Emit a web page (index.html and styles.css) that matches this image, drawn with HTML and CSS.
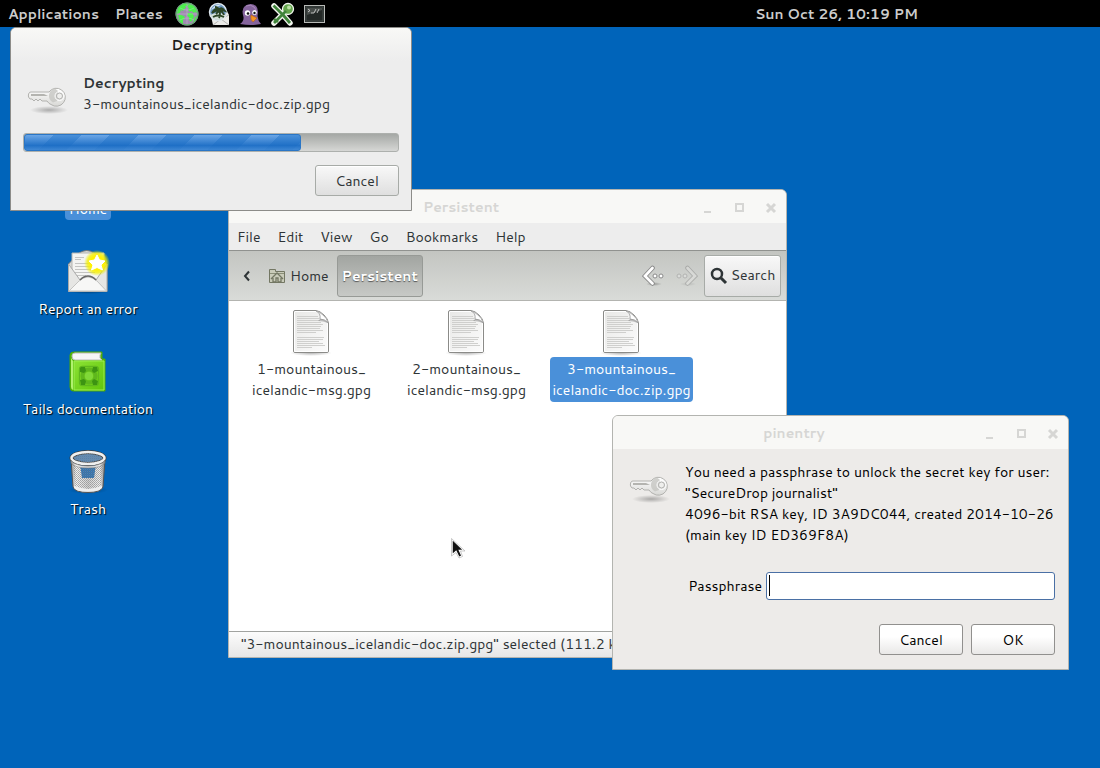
FILE: index.html
```html
<!DOCTYPE html>
<html lang="en">
<head>
<meta charset="utf-8">
<meta name="viewport" content="width=device-width, initial-scale=1">
<title>Desktop</title>
<link rel="stylesheet" href="styles.css">
</head>
<body>
<svg class="defs" aria-hidden="true">
  <defs>
    <linearGradient id="keyG" x1="0" y1="0" x2="0" y2="1"><stop offset="0" stop-color="#fff"/><stop offset="1" stop-color="#d8d8d5"/></linearGradient>
    <linearGradient id="metal" x1="0" y1="0" x2="1" y2="0"><stop offset="0" stop-color="#888"/><stop offset=".15" stop-color="#f4f4f4"/><stop offset=".5" stop-color="#d0d0d0"/><stop offset=".85" stop-color="#eee"/><stop offset="1" stop-color="#777"/></linearGradient>
    <linearGradient id="paper" x1="0" y1="0" x2="1" y2="1"><stop offset="0" stop-color="#e8e8e6"/><stop offset="1" stop-color="#fcfcfc"/></linearGradient>
    <linearGradient id="book" x1="0" y1="0" x2="1" y2="1"><stop offset="0" stop-color="#8be234"/><stop offset="1" stop-color="#62c60c"/></linearGradient>
    <radialGradient id="glow"><stop offset=".5" stop-color="#fff200"/><stop offset=".75" stop-color="#f4ee00" stop-opacity=".75"/><stop offset="1" stop-color="#e8f000" stop-opacity="0"/></radialGradient>
    <radialGradient id="shade"><stop offset="0" stop-color="#000" stop-opacity=".28"/><stop offset="1" stop-color="#000" stop-opacity="0"/></radialGradient>
    <pattern id="mesh" width="2" height="2" patternUnits="userSpaceOnUse"><rect width="1" height="1" fill="#777"/><rect x="1" y="1" width="1" height="1" fill="#888"/></pattern>
    <symbol id="key" viewBox="0 0 48 48">
      <ellipse cx="25" cy="33" rx="19" ry="4" fill="url(#shade)"/>
      <path d="M5 16Q4 18 4.500 20L6 22H8L10 24L12 22L14 24L16 22L18 24H23Q25 27 27 27.500A9 9 0 1 0 25 15H7Q5.500 15 5 16Z" fill="url(#keyG)" stroke="#b2b2af"/>
      <path d="M7 17H20L24 19H7Z" fill="#b4b4b0"/>
      <path d="M31 11.500A7.500 7.500 0 0 0 29 25.500L33 24L34 14Z" fill="#c6c6c2" opacity=".8"/>
      <circle cx="35.500" cy="19" r="3" fill="#efefed" stroke="#b0b0ae"/>
      <circle cx="35.500" cy="19" r="4.500" fill="none" stroke="#fff"/>
    </symbol>
    <symbol id="doc" viewBox="0 0 48 48">
      <ellipse cx="23" cy="45" rx="21" ry="3" fill="url(#shade)"/>
      <path d="M7 2.500H28Q32 3 36 7Q40 11 40.500 15V43Q40.500 44.500 39 44.500H7Q5.500 44.500 5.500 43V4Q5.500 2.500 7 2.500Z" fill="url(#paper)" stroke="#8b8b88"/>
      <path d="M7 3.500H28Q31 4 35 8Q39 12 39.500 15V43.500H6.500V4Z" fill="none" stroke="#fff"/>
      <path d="M9 8.500H30M9 10.500H31M9 12.500H32M9 14.500H33M9 16.500H35M9 18.500H33M9 20.500H32M9 22.500H35M9 24.500H28M9 29.500H36M9 31.500H35M9 33.500H31M9 35.500H35M9 37.500H37M9 39.500H24" stroke="#cfcfcd"/>
      <path d="M28 3Q33 5 32 11Q37 11 40 15Q39 10 35 7Q32 4 28 3Z" fill="#fff" stroke="#aaa"/>
      <path d="M32 11Q37 11 40 15Q35 13 30 13Z" fill="#888" opacity=".5"/>
    </symbol>
    <symbol id="minimize" viewBox="0 0 12 12"><path d="M1 10H8" stroke="currentColor" stroke-width="2"/></symbol>
    <symbol id="maximize" viewBox="0 0 12 12"><rect x="2" y="2" width="7" height="7" fill="none" stroke="currentColor" stroke-width="2"/></symbol>
    <symbol id="close" viewBox="0 0 12 12"><path d="M2 2L10 10M10 2L2 10" stroke="currentColor" stroke-width="3"/></symbol>
  </defs>
</svg>

<header class="panel">
  <nav class="panel-menu">
    <button class="panel-item">Applications</button>
    <button class="panel-item">Places</button>
    <button class="launcher" aria-label="Web browser"><svg viewBox="0 0 24 24">
      <circle cx="12" cy="12" r="11.500" fill="#a08bb0"/>
      <path d="M3 6Q7 1 13 2L12 4L10 4L11 6L9 7L8 9L6 8L5 11L2 12ZM14 2Q19 3 21 7L22 11L20 10L18 11L17 9L15 10L13 8L14 6L12 5ZM3 13L6 13L9 14L10 16L8 18L8 22L5 20L4 17ZM13 11L17 11L19 14L18 17L16 20L14 18L14 15L12 14ZM20 15L22 14L20 19L18 20Z" fill="#4df04d"/>
      <circle cx="12" cy="12" r="11" fill="none" stroke="#56b961"/><path d="M2 12H22M12 2V22M5 6Q12 10 19 6M5 18Q12 14 19 18" fill="none" stroke="#d6cbdc" stroke-width=".6" opacity=".6"/>
    </svg></button>
    <button class="launcher" aria-label="Mail"><svg viewBox="0 0 24 24">
      <path d="M4 14L20 9L22 13V23H6Z" fill="#ecece9"/><path d="M6 23L14 17L22 23M14 17L22 13" fill="none" stroke="#a4a4a2" stroke-width=".8"/>
      <circle cx="11" cy="10" r="8.500" fill="#6b96bf" stroke="#dfe8ef" stroke-width="1.500"/>
      <path d="M4 8Q8 2 14 3Q9 5 4 8Z" fill="#d5e5f3"/>
      <path d="M3 13Q11 9 19 13Q16 18 11 18Q6 18 3 13Z" fill="#d5e0d9"/>
      <path d="M12 16Q14 12 12 8M12 8Q8 5 5 11Q9 8 12 8Q11 10 9 12M12 8Q14 4 18 9Q15 8 12 8Q16 10 17 13M12 8Q11 5 8 5M6 15Q11 12 17 15" fill="none" stroke="#2b4425" stroke-width="1.800"/>
    </svg></button>
    <button class="launcher" aria-label="Messenger"><svg viewBox="0 0 24 24">
      <path d="M1 22Q5 19 4.500 15Q2 7 6 4Q12 0 17 4Q20 7 18.500 14Q19 19 22 22Q12 24 1 22Z" fill="#85649c"/>
      <path d="M7 4Q12 2 15 5Q17 7 17 10" fill="none" stroke="#aa8abb"/>
      <ellipse cx="8.500" cy="11" rx="2.700" ry="2.700" fill="#fff"/><ellipse cx="15.500" cy="10.500" rx="2.300" ry="2.500" fill="#fff"/>
      <circle cx="9" cy="11.500" r="1.300" fill="#111"/><circle cx="15.500" cy="11" r="1.200" fill="#111"/>
      <path d="M12 13L18 16L14 20Q11 18 12 13Z" fill="#f59422" stroke="#b75a0a" stroke-width=".5"/>
    </svg></button>
    <button class="launcher" aria-label="Passwords"><svg viewBox="0 0 24 24">
      <path d="M3 4L13 14L19 21M3 21L15 9" fill="none" stroke="#f3f6ef" stroke-width="5.500" stroke-linecap="round"/>
      <circle cx="17" cy="7" r="5.500" fill="#64a64d" stroke="#f3f6ef" stroke-width="1.300"/>
      <path d="M2.500 3.500L13 14L19 21M3 21L15 9M3 17L7 20" fill="none" stroke="#40843b" stroke-width="2.800"/>
      <circle cx="18" cy="5.500" r="2" fill="#b9dfa4"/>
    </svg></button>
    <button class="launcher" aria-label="Terminal"><svg viewBox="0 0 24 24">
      <rect x="1.500" y="3.500" width="20" height="17" fill="#232826" stroke="#b8bab7"/><rect x="3" y="5" width="17" height="14" fill="none" stroke="#454a48"/>
      <path d="M4 13L19 8V6H4Z" fill="#606663" opacity=".6"/><path d="M5 7L7 8.500L5 10M8 11H11M13 7L11 11M16 7L14 11" fill="none" stroke="#ddd" stroke-width=".8"/>
    </svg></button>
  </nav>
  <button class="panel-item clock">Sun Oct 26, 10:19 PM</button>
</header>

<main class="desktop">
  <section class="shortcuts" aria-label="Desktop icons">
    <a class="shortcut" href="#home"><svg viewBox="0 0 48 48"><path d="M5 12H18L21 16H43V43H5Z" fill="#aaa78f"/></svg><span class="shortcut-label selected">Home</span></a>
    <a class="shortcut" href="#report"><svg viewBox="0 0 48 48">
      <ellipse cx="24" cy="46" rx="21" ry="2" fill="url(#shade)"/>
      <path d="M4.500 18L15 7Q23 2 30 7L43 18V45.500H4.500Z" fill="#d8d8d5" stroke="#777"/>
      <path d="M8 7H40V36H8Z" fill="#f4f4f2" stroke="#b5b5b2"/>
      <path d="M11 11.500H20M11 13.500H17M11 17.500H26M11 20.500H27M11 23.500H30M11 26.500H31M11 29.500H22" stroke="#c4c4c2"/>
      <path d="M4.500 18L16 34Q23 28 32 34L43 18V45.500H4.500Z" fill="#e6e6e4" stroke="#aaa"/>
      <path d="M5 45L15 35Q24 27 33 35L42.500 45Z" fill="#f7f7f6" stroke="#c4c4c2"/>
      <path d="M16 34Q20 30 24 30Q28 30 32 34" fill="none" stroke="#666" stroke-width="1.500"/>
      <circle cx="33" cy="17" r="13" fill="url(#glow)"/>
      <path d="M33 9L35.500 14L41 15L37 19L38.500 24L33 21.500L27.500 24L29 19L25 15L30.500 14Z" fill="#fff" stroke="#fff" stroke-linejoin="round"/>
    </svg><span class="shortcut-label">Report an error</span></a>
    <a class="shortcut" href="#documentation"><svg viewBox="0 0 48 48">
      <path d="M6 9Q6 6 10 6H38V13H41V45H9Q6 45 6 41Z" fill="#56b90b" stroke="#4aa808"/>
      <path d="M8 10Q8 7 11 7H37L36 9V12L38 14H11Q8 14 8 10Z" fill="#f6f6f6" stroke="#bbb"/>
      <path d="M10 15H40V44H10Z" fill="url(#book)" stroke="#9def50"/>
      <path d="M7 12V41Q7 43 9 44V15Z" fill="#b2f16f"/>
      <g fill="none" stroke="#5fb71d"><circle cx="25" cy="30" r="6.500" stroke-width="4"/><rect x="15.500" y="20.500" width="19" height="19" rx="3" stroke-width="1.300"/></g>
      <path d="M17 21H21L22 25L20 27L16 26V22ZM29 21H33L34 25L30 27L28 25ZM16 34L20 33L22 35L21 39H17ZM30 33L34 35L33 39H29L28 35Z" fill="#3d9412"/>
      <circle cx="25" cy="30" r="4" fill="#80d838"/>
    </svg><span class="shortcut-label">Tails documentation</span></a>
    <a class="shortcut" href="#trash"><svg viewBox="0 0 48 48">
      <ellipse cx="24" cy="44" rx="20" ry="4" fill="url(#shade)"/>
      <path d="M7 14L9 41Q11 46.500 24 46.500Q37 46.500 39 41L41 14Z" fill="url(#metal)" stroke="#555"/>
      <path d="M16 18H32L30 32H18Z" fill="#2874bc"/>
      <path d="M9 18L11 40Q24 46 37 40L39 18Z" fill="url(#mesh)" opacity=".6"/>
      <path d="M10 40Q24 46 38 40V42Q33 45.500 24 45.500Q13 45.500 10 42Z" fill="#eee"/>
      <ellipse cx="24" cy="12" rx="16.500" ry="6" fill="#5a8cbd" stroke="#3c3c3c" stroke-width="4"/>
      <ellipse cx="24" cy="12" rx="16.500" ry="6" fill="url(#mesh)" fill-opacity=".5" stroke="#f0f0f0" stroke-width="2.500"/>
      <path d="M7 14Q10 20 24 20Q38 20 41 14V17Q37 22 24 22Q11 22 7 17Z" fill="url(#metal)" stroke="#777" stroke-width=".5"/>
    </svg><span class="shortcut-label">Trash</span></a>
  </section>

  <section class="window files" aria-label="Persistent">
    <div class="titlebar"><h2 class="title">Persistent</h2>
      <div class="controls"><button aria-label="Minimize"><svg><use href="#minimize"/></svg></button><button aria-label="Maximize"><svg><use href="#maximize"/></svg></button><button aria-label="Close"><svg><use href="#close"/></svg></button></div>
    </div>
    <nav class="menubar"><button>File</button><button>Edit</button><button>View</button><button>Go</button><button>Bookmarks</button><button>Help</button></nav>
    <div class="toolbar">
      <button class="tool back" aria-label="Scroll path left"><svg viewBox="0 0 10 12"><path d="M7 1.500L3 6L7 10.500" fill="none" stroke="#2e3436" stroke-width="2"/></svg></button>
      <button class="tool crumb"><svg viewBox="0 0 18 18"><path d="M1.500 15.500V2.500H7.500V4.500H16.500V15.500Z" fill="#c9cbb9" stroke="#737763"/><path d="M2 6.500H16" stroke="#8b8f79"/><path d="M3 12L9 6L15 12M5 11V15H8V11H10V15H13V11" fill="none" stroke="#737763" stroke-width="1.300"/></svg>Home</button>
      <button class="tool crumb current">Persistent</button>
      <div class="history">
        <button class="tool" aria-label="Back"><svg viewBox="0 0 22 22"><ellipse cx="12" cy="19" rx="8" ry="2" fill="url(#shade)"/><path d="M10.500 3L3 11L10.500 18.500" fill="none" stroke="#888" stroke-width="4.500" stroke-linecap="round"/><path d="M10.500 3L3 11L10.500 18.500" fill="none" stroke="#fff" stroke-width="2.700" stroke-linecap="round"/><circle cx="13" cy="11" r="2" fill="#fff" stroke="#888"/><circle cx="19" cy="11" r="2" fill="#fff" stroke="#888"/></svg></button>
        <button class="tool faded" aria-label="Forward" disabled><svg viewBox="0 0 22 22"><ellipse cx="12" cy="19" rx="8" ry="2" fill="url(#shade)"/><path d="M11.500 3L19 11L11.500 18.500" fill="none" stroke="#777" stroke-width="4.500" stroke-linecap="round"/><path d="M11.500 3L19 11L11.500 18.500" fill="none" stroke="#e8e8e6" stroke-width="2.700" stroke-linecap="round"/><circle cx="9" cy="11" r="2" fill="#eee" stroke="#888"/><circle cx="3" cy="11" r="2" fill="#eee" stroke="#888"/></svg></button>
      </div>
      <button class="button search"><svg viewBox="0 0 18 18"><circle cx="7" cy="7" r="5" fill="none" stroke="#2e3436" stroke-width="2.500"/><path d="M11 11L16 16" stroke="#2e3436" stroke-width="3"/></svg>Search</button>
    </div>
    <div class="file-list">
      <div class="file"><svg><use href="#doc"/></svg><span class="file-name">1-mountainous_<br>icelandic-msg.gpg</span></div>
      <div class="file"><svg><use href="#doc"/></svg><span class="file-name">2-mountainous_<br>icelandic-msg.gpg</span></div>
      <div class="file"><svg><use href="#doc"/></svg><span class="file-name selected">3-mountainous_<br>icelandic-doc.zip.gpg</span></div>
    </div>
    <footer class="statusbar">"3-mountainous_icelandic-doc.zip.gpg" selected (111.2 kB)</footer>
  </section>

  <section class="window decrypting" role="dialog" aria-label="Decrypting">
    <div class="titlebar active"><h2 class="title">Decrypting</h2></div>
    <div class="dialog-body">
      <div class="message"><svg class="key"><use href="#key"/></svg><div><label class="heading" for="decrypt-progress">Decrypting</label><p class="filename">3-mountainous_icelandic-doc.zip.gpg</p></div></div>
      <progress id="decrypt-progress" value="74" max="100"></progress>
      <div class="actions"><button class="button">Cancel</button></div>
    </div>
  </section>

  <section class="window pinentry" role="dialog" aria-label="pinentry">
    <div class="titlebar"><h2 class="title">pinentry</h2>
      <div class="controls"><button aria-label="Minimize"><svg><use href="#minimize"/></svg></button><button aria-label="Maximize"><svg><use href="#maximize"/></svg></button><button aria-label="Close"><svg><use href="#close"/></svg></button></div>
    </div>
    <form class="dialog-body">
      <div class="message"><svg class="key"><use href="#key"/></svg><p>You need a passphrase to unlock the secret key for user:<br>"SecureDrop journalist"<br>4096-bit RSA key, ID 3A9DC044, created 2014-10-26<br>(main key ID ED369F8A)</p></div>
      <div class="field"><label for="passphrase">Passphrase</label><div class="entry"><input id="passphrase" type="password"><i class="caret"></i></div></div>
      <div class="actions"><button class="button" type="button">Cancel</button><button class="button" type="button">OK</button></div>
    </form>
  </section>

  <svg class="pointer" viewBox="0 0 14 21" aria-hidden="true"><path d="M1 1V17L5 13.500L8 19.500L11 18L8.500 12.500H13Z" fill="#111" stroke="#fff" stroke-width="1.500"/><path d="M.5 .5V18L5 14.500L8 20L11.500 18.500L9.500 13H14Z" fill="none" stroke="#999" stroke-width=".5"/></svg>
</main>
</body>
</html>
```
FILE: styles.css
```css
* { box-sizing: border-box; }
body {
  margin: 0;
  min-height: 100vh;
  display: flex;
  flex-direction: column;
  background: #0064ba;
  color: #2e3436;
  font: 14px/21px Cantarell, "Open Sans", "Noto Sans", sans-serif;
}
h2, p { margin: 0; }
button, input { font: inherit; color: inherit; }
button { border: 0; padding: 0; background: none; white-space: nowrap; }
svg { display: block; flex: none; }
.defs { position: absolute; width: 0; height: 0; }

.panel {
  height: 27px;
  padding: 0 182px 0 8px;
  display: flex;
  align-items: center;
  justify-content: space-between;
  background: #000;
  color: #ccc;
}
.panel-menu { display: flex; align-items: center; gap: 8px; }
.panel-item { padding-top: 2px; font-weight: 600; }
.panel-menu .panel-item { margin-right: 8px; }
.panel-menu .panel-item + .panel-item { margin-right: 4px; }
.launcher svg { width: 24px; height: 24px; }

.desktop { position: relative; flex: 1; }
.shortcuts {
  width: 176px;
  padding-top: 119px;
  display: flex;
  flex-direction: column;
  gap: 26px;
}
.shortcut {
  display: flex;
  flex-direction: column;
  align-items: center;
  gap: 5px;
  color: #fff;
  text-decoration: none;
  text-shadow: 1px 1px 1px #000;
}
.shortcut svg { width: 48px; height: 48px; }
.shortcut-label { padding: 0 4px; border-radius: 4px; white-space: nowrap; }
.selected { background: #4a90d9; color: #fff; text-shadow: none; }

.window {
  position: absolute;
  display: flex;
  flex-direction: column;
  border: 1px solid #b3b4b0;
  border-radius: 6px 6px 0 0;
  background: #ededed;
}
.files { left: 228px; top: 162px; width: 559px; }
.decrypting { left: 10px; top: 0; width: 402px; border-color: #8c8c89; }
.pinentry { left: 612px; top: 388px; width: 457px; background: #edebe9; color: #000; }

.titlebar {
  display: flex;
  align-items: center;
  height: 33px;
  padding-top: 2px;
  border-radius: 5px 5px 0 0;
  background: #f8f8f6;
  color: #d6d6d4;
}
.titlebar.active { padding-left: 2px; background: linear-gradient(#f8f8f6, #ededed); color: #1c1c1c; }
.title { flex: 1; text-align: center; font-size: 14px; }
.controls { display: flex; }
.controls button { width: 31px; height: 30px; display: grid; place-items: center; }
.controls svg { width: 12px; height: 12px; }

.menubar { display: flex; gap: 17px; height: 27px; padding: 2px 8px 0; }
.toolbar {
  display: flex;
  align-items: center;
  height: 51px;
  padding: 0 5px;
  border-top: 1px solid #90928f;
  border-bottom: 1px solid #b3b4b0;
  background: linear-gradient(#c3c5c1, #d9dbd8);
}
.tool { display: flex; align-items: center; justify-content: center; gap: 4px; height: 42px; padding: 0 5px; }
.back { width: 25px; }
.back svg { width: 10px; height: 12px; }
.crumb svg { width: 18px; height: 18px; }
.crumb { padding: 1px 5px 0; }
.crumb:not(.current) { margin: 0 4px; padding-right: 4px; }
.current {
  padding: 1px 4px 0;
  border: 1px solid #979a96;
  border-radius: 3px;
  background: linear-gradient(#a2a5a1, #c7c9c6);
  color: #fff;
  font-weight: 700;
  text-shadow: 0 1px 1px #555;
}
.history { display: flex; margin: 0 1px 0 auto; gap: 2px; }
.history svg { width: 22px; height: 22px; }
.faded { opacity: .4; }
.button {
  min-width: 84px;
  height: 31px;
  padding: 2px 4px 0;
  border: 1px solid #a7aba7;
  border-radius: 3px;
  background: linear-gradient(#f8f8f8, #dfdfdf);
  box-shadow: inset 0 1px #fff;
}
.search { display: flex; align-items: center; justify-content: center; gap: 3px; height: 42px; min-width: 77px; padding-top: 0; }
.search svg { width: 18px; height: 18px; }

.file-list {
  display: grid;
  grid-template-columns: repeat(3, 155px);
  align-items: start;
  min-height: 330px;
  padding: 7px 5px;
  background: #fff;
}
.file { display: flex; flex-direction: column; align-items: center; gap: 1px; text-align: center; }
.file svg { width: 48px; height: 48px; }
.file-name { padding: 2px 2px 1px; border-radius: 4px; white-space: nowrap; }
.statusbar {
  height: 26px;
  padding: 2px 12px;
  border-top: 1px solid #a1a3a0;
  background: linear-gradient(#fcfcfc, #e6e6e6);
  white-space: nowrap;
  overflow: hidden;
}

.dialog-body { padding: 12px; display: flex; flex-direction: column; }
.message { display: flex; gap: 11px; padding-left: 1px; white-space: nowrap; }
.key { width: 48px; height: 48px; margin-top: 4px; }
.heading { font-weight: 700; }
.decrypting .dialog-body { padding-bottom: 14px; }
progress {
  appearance: none;
  width: 100%;
  height: 19px;
  margin: 8px 0 13px;
  border: 0;
}
progress::-webkit-progress-bar {
  border: 1px solid #adb0ad;
  border-radius: 3px;
  background: linear-gradient(#a5a8a5, #d6d7d5);
}
progress::-webkit-progress-value {
  border: 1px solid #2a76c6;
  border-radius: 3px;
  background:
    linear-gradient(#4a90d900, #1a6cc4e6 70%, #3a84d2dd),
    repeating-linear-gradient(135deg, #6ba6e6 0 20px, #4a90d9 20px 40px);
}
.actions { display: flex; justify-content: flex-end; gap: 8px; }
.pinentry .dialog-body { padding: 13px 13px 14px 12px; }
.field { display: flex; align-items: center; justify-content: flex-end; gap: 4px; margin: 26px 0 24px; }
.entry { position: relative; }
.entry input {
  display: block;
  width: 289px;
  height: 28px;
  padding: 2px 6px;
  border: 1px solid #4a70a5;
  border-radius: 3px;
  background: #fff;
  outline: none;
}
.caret { position: absolute; left: 3px; top: 3px; width: 1px; height: 21px; background: #000; }
.pinentry .button { border-color: #91908e; background: linear-gradient(#fff 40%, #e9e8e7); }
.pointer { position: absolute; left: 451px; top: 511px; width: 14px; height: 21px; }
```
